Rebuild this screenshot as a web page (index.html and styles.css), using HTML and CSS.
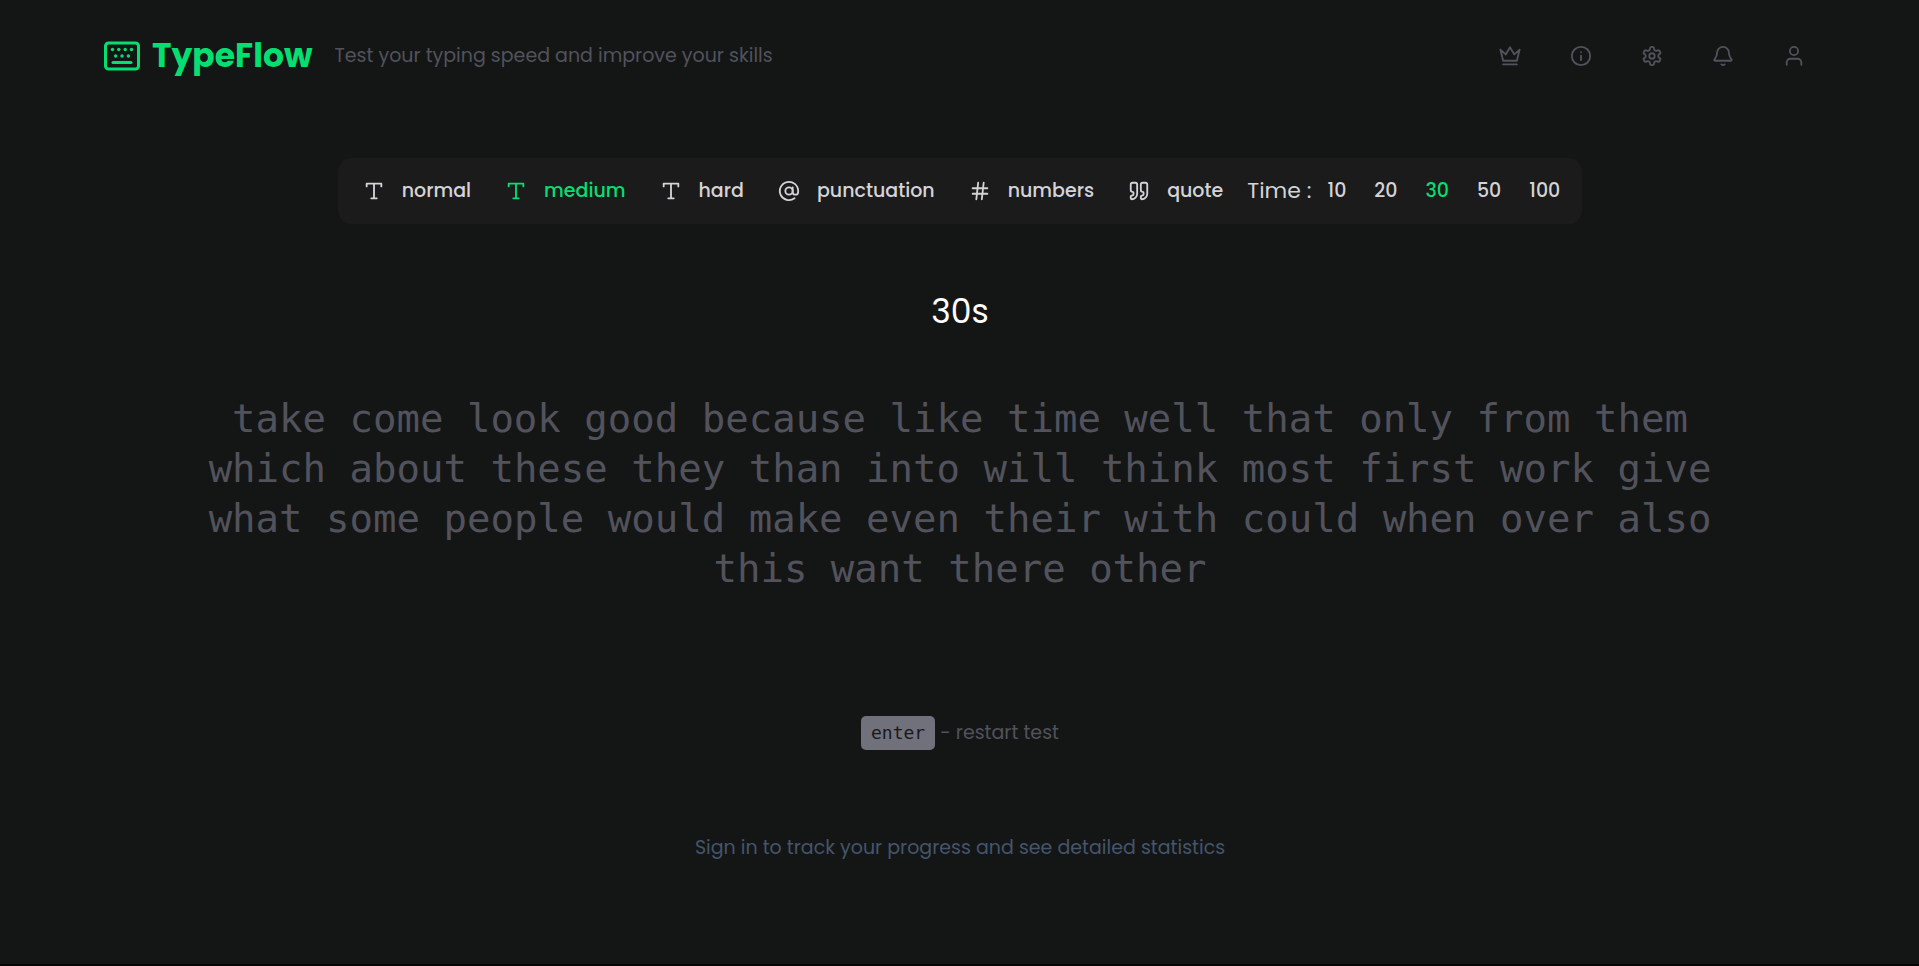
FILE: index.html
```html
<!DOCTYPE html>
<html lang="en">
<head>
<meta charset="utf-8">
<meta name="viewport" content="width=device-width, initial-scale=1">
<title>TypeFlow</title>
<link rel="stylesheet" href="styles.css">
</head>
<body>
<svg class="sprite" aria-hidden="true">
  <symbol id="type" viewBox="0 0 24 24"><path d="M4 7V4h16v3M9 20h6M12 4v16"/></symbol>
  <symbol id="at" viewBox="0 0 24 24"><circle cx="12" cy="12" r="4"/><path d="M16 8v5a3 3 0 0 0 6 0v-1a10 10 0 1 0-4 8"/></symbol>
  <symbol id="hash" viewBox="0 0 24 24"><path d="M4 9h16M4 15h16M10 3 8 21M16 3l-2 18"/></symbol>
  <symbol id="quote" viewBox="0 0 24 24"><path d="M16 3a2 2 0 0 0-2 2v6a2 2 0 0 0 2 2 1 1 0 0 1 1 1v1a2 2 0 0 1-2 2 1 1 0 0 0-1 1v2a1 1 0 0 0 1 1 6 6 0 0 0 6-6V5a2 2 0 0 0-2-2zM5 3a2 2 0 0 0-2 2v6a2 2 0 0 0 2 2 1 1 0 0 1 1 1v1a2 2 0 0 1-2 2 1 1 0 0 0-1 1v2a1 1 0 0 0 1 1 6 6 0 0 0 6-6V5a2 2 0 0 0-2-2z"/></symbol>
</svg>
<header class="header">
  <a class="brand" href="#">
    <svg class="logo" viewBox="0 0 36 30" aria-hidden="true"><rect x="1.5" y="2" width="33" height="26" rx="3"/><path d="M9 21.500h18"/><g class="keys"><circle cx="8.500" cy="8.500" r="1.700"/><circle cx="14.800" cy="8.500" r="1.700"/><circle cx="21.200" cy="8.500" r="1.700"/><circle cx="27.500" cy="8.500" r="1.700"/><circle cx="11.600" cy="15" r="1.700"/><circle cx="18" cy="15" r="1.700"/><circle cx="24.400" cy="15" r="1.700"/></g></svg>
    <span class="name">TypeFlow</span>
  </a>
  <p class="tagline">Test your typing speed and improve your skills</p>
  <nav class="nav">
    <a href="#" aria-label="Leaderboard"><svg viewBox="0 0 24 24"><path d="M1.500 5 4.500 17.200h15L22.500 5l-5.800 5.300L12 2.500l-4.700 7.800zM4.500 21.200h15"/></svg></a>
    <a href="#" aria-label="About"><svg viewBox="0 0 24 24"><circle cx="12" cy="12" r="10"/><path d="M12 16.500V11.500M12 8v-.1"/></svg></a>
    <a href="#" aria-label="Settings"><svg viewBox="0 0 24 24"><path d="M12.220 2h-.44a2 2 0 0 0-2 2v.18a2 2 0 0 1-1 1.730l-.43.25a2 2 0 0 1-2 0l-.15-.08a2 2 0 0 0-2.730.73l-.22.38a2 2 0 0 0 .73 2.730l.15.1a2 2 0 0 1 1 1.720v.51a2 2 0 0 1-1 1.740l-.15.09a2 2 0 0 0-.73 2.730l.22.38a2 2 0 0 0 2.730.73l.15-.08a2 2 0 0 1 2 0l.43.25a2 2 0 0 1 1 1.730V20a2 2 0 0 0 2 2h.44a2 2 0 0 0 2-2v-.18a2 2 0 0 1 1-1.730l.43-.25a2 2 0 0 1 2 0l.15.08a2 2 0 0 0 2.730-.73l.22-.39a2 2 0 0 0-.73-2.730l-.15-.08a2 2 0 0 1-1-1.740v-.5a2 2 0 0 1 1-1.740l.15-.09a2 2 0 0 0 .73-2.730l-.22-.38a2 2 0 0 0-2.730-.73l-.15.08a2 2 0 0 1-2 0l-.43-.25a2 2 0 0 1-1-1.730V4a2 2 0 0 0-2-2z"/><circle cx="12" cy="12" r="3"/></svg></a>
    <a href="#" aria-label="Notifications"><svg viewBox="0 0 24 24"><path d="M18.500 8.500a6.500 6.500 0 0 0-13 0c0 4.300-1.400 5.500-2.700 7a1 1 0 0 0 .8 1.700h16.800a1 1 0 0 0 .8-1.700c-1.300-1.500-2.700-2.700-2.700-7M10.300 21.200a2.500 2.500 0 0 0 3.400 0"/></svg></a>
    <a href="#" aria-label="Account"><svg viewBox="0 0 24 24"><circle cx="12" cy="6.500" r="4.500"/><path d="M4 21.500V19a4 4 0 0 1 4-4h8a4 4 0 0 1 4 4v2.500"/></svg></a>
  </nav>
</header>
<main class="main">
  <div class="toolbar">
    <div class="modes">
      <button><svg><use href="#type"/></svg>normal</button>
      <button class="active"><svg><use href="#type"/></svg>medium</button>
      <button><svg><use href="#type"/></svg>hard</button>
      <button><svg><use href="#at"/></svg>punctuation</button>
      <button><svg><use href="#hash"/></svg>numbers</button>
      <button><svg><use href="#quote"/></svg>quote</button>
    </div>
    <div class="times">
      <span class="time-label">Time :</span>
      <button>10</button>
      <button>20</button>
      <button class="active">30</button>
      <button>50</button>
      <button>100</button>
    </div>
  </div>
  <div class="timer">30s</div>
  <p class="words">take come look good because like time well that only from them which about these they than into will think most first work give what some people would make even their with could when over also this want there other</p>
  <p class="hint"><kbd>enter</kbd> - restart test</p>
  <p class="signin">Sign in to track your progress and see detailed statistics</p>
</main>
</body>
</html>
```
FILE: styles.css
```css
* { box-sizing: border-box; }
body {
  margin: 0;
  min-height: 100vh;
  background: #141615;
  border-bottom: 2px solid #060506;
  color: #d4d4d8;
  font-family: Poppins, Inter, sans-serif;
  font-size: 19px;
  line-height: 30px;
}
p { margin: 0; }
a { color: inherit; text-decoration: none; }
svg { fill: none; stroke: currentColor; stroke-width: 2; stroke-linecap: round; stroke-linejoin: round; flex: none; }
button { border: 0; padding: 0; background: none; color: inherit; font: inherit; font-weight: 500; cursor: pointer; }
.sprite { position: absolute; width: 0; height: 0; }
.header { display: flex; align-items: center; height: 112px; padding: 0 114px 0 104px; color: #52525c; }
.brand { display: flex; align-items: center; gap: 12px; color: #05df72; }
.logo { width: 36px; height: 30px; stroke-width: 3; }
.keys { fill: currentColor; stroke: none; }
.name { font-size: 33px; font-weight: 700; line-height: 40px; }
.tagline { margin-left: 22px; }
.nav { display: flex; gap: 49px; margin-left: auto; }
.nav a { display: flex; }
.nav svg { width: 22px; height: 22px; }
.main { display: flex; flex-direction: column; align-items: center; padding: 46px 189px 0 190px; }
.toolbar { display: flex; align-items: center; gap: 24px; height: 66px; padding: 0 22px 0 25px; border-radius: 14px; background: #1b1b1b; }
.modes { display: flex; gap: 34px; }
.modes button { display: flex; align-items: center; gap: 17px; }
.modes svg { width: 22px; height: 22px; }
.times { display: flex; align-items: center; gap: 28px; }
.time-label { font-size: 22px; margin-right: -12px; }
.active { color: #05df72; }
.timer { margin-top: 64px; color: #fff; font-size: 33px; line-height: 48px; }
.words { margin-top: 58px; color: #52525c; font-family: Consolas, "DejaVu Sans Mono", monospace; font-size: 39px; line-height: 50px; text-align: center; }
.hint { margin-top: 122px; color: #52525c; }
kbd { display: inline-block; padding: 2px 10px; border-radius: 5px; background: #71717b; color: #18181b; font-family: Consolas, "DejaVu Sans Mono", monospace; font-size: 18px; }
.signin { margin-top: 83px; color: #45556c; }
```
